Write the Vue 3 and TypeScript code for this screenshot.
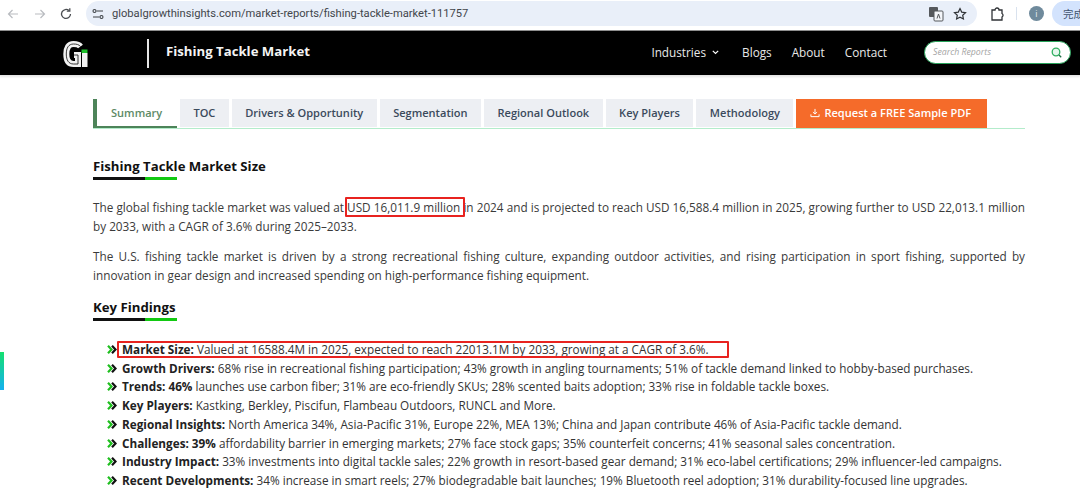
<script setup lang="ts">
const tabs: string[] = ['TOC', 'Drivers & Opportunity', 'Segmentation', 'Regional Outlook', 'Key Players', 'Methodology']
const findings: { label: string; text: string }[] = [
  { label: 'Market Size:', text: 'Valued at 16588.4M in 2025, expected to reach 22013.1M by 2033, growing at a CAGR of 3.6%.' },
  { label: 'Growth Drivers:', text: '68% rise in recreational fishing participation; 43% growth in angling tournaments; 51% of tackle demand linked to hobby-based purchases.' },
  { label: 'Trends: 46%', text: 'launches use carbon fiber; 31% are eco-friendly SKUs; 28% scented baits adoption; 33% rise in foldable tackle boxes.' },
  { label: 'Key Players:', text: 'Kastking, Berkley, Piscifun, Flambeau Outdoors, RUNCL and More.' },
  { label: 'Regional Insights:', text: 'North America 34%, Asia-Pacific 31%, Europe 22%, MEA 13%; China and Japan contribute 46% of Asia-Pacific tackle demand.' },
  { label: 'Challenges: 39%', text: 'affordability barrier in emerging markets; 27% face stock gaps; 35% counterfeit concerns; 41% seasonal sales concentration.' },
  { label: 'Industry Impact:', text: '33% investments into digital tackle sales; 22% growth in resort-based gear demand; 31% eco-label certifications; 29% influencer-led campaigns.' },
  { label: 'Recent Developments:', text: '34% increase in smart reels; 27% biodegradable bait launches; 19% Bluetooth reel adoption; 31% durability-focused line upgrades.' },
]
</script>

<template>
  <div class="page">
    <header class="browser">
      <div class="nav-icons">
        <svg width="14" height="14" viewBox="0 0 14 14" fill="none" stroke="#b9bcc0" stroke-width="1.2"><path d="M12 7H2.500M6.500 3 2.500 7l4 4" /></svg>
        <svg width="14" height="14" viewBox="0 0 14 14" fill="none" stroke="#b9bcc0" stroke-width="1.2"><path d="M2 7h9.500M7.500 3l4 4-4 4" /></svg>
        <svg width="14" height="14" viewBox="0 0 14 14" fill="none" stroke="#4a4d51" stroke-width="1.300"><path d="M11.500 7A4.500 4.500 0 1 1 10 3.600" /><path d="M10.800 1.200v3h-3" /></svg>
      </div>
      <div class="omnibox">
        <svg class="tune" width="14" height="14" viewBox="0 0 14 14" fill="none" stroke="#3f4347" stroke-width="1.100"><path d="M5.500 4H12M2 10h6.500" /><circle cx="3.500" cy="4" r="1.500" /><circle cx="10.500" cy="10" r="1.500" /></svg>
        <span class="url">globalgrowthinsights.com/market-reports/fishing-tackle-market-111757</span>
        <svg class="translate" width="16" height="16" viewBox="0 0 16 16"><rect x="1" y="1" width="9" height="10" rx="1" fill="#55585c" /><rect x="6" y="5" width="9" height="10" rx="1" fill="#f4f6fa" stroke="#55585c" /><path d="M9 12.500 10.500 8l1.500 4.500" stroke="#55585c" fill="none" /></svg>
        <svg class="star" width="14" height="14" viewBox="0 0 14 14" fill="none" stroke="#2f3236" stroke-width="1.200"><path d="m7 1.600 1.700 3.500 3.800.5-2.800 2.600.7 3.800L7 10.200 3.600 12l.7-3.800L1.500 5.600l3.800-.5z" /></svg>
      </div>
      <svg class="ext" width="16" height="16" viewBox="0 0 16 16" fill="none" stroke="#2f3236" stroke-width="1.300"><path d="M3 4h3a2 2 0 0 1 4 0h3v3.500a2 2 0 0 1 0 3.500V14H3z" /></svg>
      <span class="divider"></span>
      <span class="avatar">i</span>
      <span class="done">完成</span>
    </header>

    <nav class="site-nav">
      <svg class="logo" width="25" height="26" viewBox="0 0 25 26" fill="none" aria-label="logo">
        <path d="M17.500 5.500C16 3.500 13.500 3 10.500 3 5.500 3 3.300 7 3.300 13S5.500 23 10.500 23H15V14H11" stroke="#f2f2f2" stroke-width="6" />
        <path d="M17.500 5.500C16 3.500 13.500 3 10.500 3 5.500 3 3.300 7 3.300 13S5.500 23 10.500 23H15V14H11" stroke="#222" stroke-width="0.900" />
        <rect x="19" y="12" width="5.500" height="14" fill="#f2f2f2" />
        <rect x="18.500" y="8.500" width="6" height="3.500" fill="#1fc02c" />
      </svg>
      <span class="rule"></span>
      <span class="title">Fishing Tackle Market</span>
      <div class="links">
        <span>Industries <svg class="chev" width="7" height="5" viewBox="0 0 7 5" fill="none" stroke="#fff" stroke-width="1.200"><path d="m.8.8 2.700 2.700L6.200.8" /></svg></span>
        <span>Blogs</span>
        <span>About</span>
        <span>Contact</span>
      </div>
      <div class="search">
        <span>Search Reports</span>
        <svg width="11" height="11" viewBox="0 0 11 11" fill="none" stroke="#2fae5f" stroke-width="1.300"><circle cx="5" cy="5" r="3.800" fill="#e6f7ee" /><path d="m8 8 2.200 2.200" stroke="#1f6f45" /></svg>
      </div>
    </nav>

    <main class="content">
      <div class="tabs">
        <span class="tab active">Summary</span>
        <span v-for="t in tabs" :key="t" class="tab">{{ t }}</span>
        <span class="tab cta">
          <svg width="10" height="10" viewBox="0 0 11 11" fill="none" stroke="#fff" stroke-width="1.100"><path d="M5.500 1v5.500M3.200 4.500l2.300 2.200 2.300-2.200M1 7v2.500h9V7" /></svg>
          Request a FREE Sample PDF
        </span>
      </div>

      <h2 class="heading first">Fishing Tackle Market Size</h2>
      <p class="para">
        The global fishing tackle market was valued at <span class="mark-a">USD 16,011.9 million</span> in 2024 and is projected to reach USD 16,588.4 million in 2025, growing further to USD 22,013.1 million by 2033, with a CAGR of 3.6% during 2025–2033.
      </p>
      <p class="para second">
        The U.S. fishing tackle market is driven by a strong recreational fishing culture, expanding outdoor activities, and rising participation in sport fishing, supported by innovation in gear design and increased spending on high-performance fishing equipment.
      </p>

      <h2 class="heading">Key Findings</h2>
      <ul class="list">
        <li v-for="(f, i) in findings" :key="f.label" :class="{ marked: i === 0 }">
          <svg class="arrow" width="10" height="9" viewBox="0 0 10 9" fill="none" stroke-width="2.200"><path d="M1 .8 4.500 4.500 1 8.200" stroke="#1fbf1f" /><path d="M5 .8 8.500 4.500 5 8.200" stroke="#111" /></svg>
          <b>{{ f.label }}</b> {{ f.text }}
        </li>
      </ul>
    </main>

    <span class="edge"></span>
  </div>
</template>

<style>
html, body { margin: 0; background: #fff; overflow: hidden; }
</style>

<style scoped>
.page {
  position: relative;
  width: 1080px;
  height: 491px;
  overflow: hidden;
  font-family: "Open Sans", "Noto Sans", sans-serif;
  color: #333;
}
.browser {
  height: 31px;
  box-sizing: border-box;
  padding-bottom: 3px;
  display: flex;
  align-items: center;
  background: #fff;
  border-bottom: 1px solid #8f8f8f;
}
.nav-icons {
  display: flex;
  gap: 12.500px;
  padding-left: 6px;
  width: 86px;
  box-sizing: border-box;
}
.omnibox {
  width: 891px;
  height: 25px;
  border-radius: 13px;
  background: #e9eff9;
  display: flex;
  align-items: center;
}
.tune { margin-left: 5px; }
.url {
  margin-left: 7px;
  font-family: "Roboto", "Noto Sans", sans-serif;
  font-size: 11.160px;
  color: #42464b;
  flex: 1;
}
.translate { margin-right: 9px; }
.star { margin-right: 10px; }
.ext { margin-left: 12px; }
.divider { width: 1px; height: 13px; background: #d9e2ee; margin-left: 11px; }
.avatar {
  width: 15px;
  height: 15px;
  border-radius: 50%;
  background: #6f8a9c;
  color: #e8eef2;
  font-size: 9px;
  line-height: 15px;
  text-align: center;
  margin-left: 12px;
}
.done {
  margin-left: 8px;
  flex: 1;
  height: 25px;
  line-height: 25px;
  padding-left: 11px;
  border-radius: 13px 0 0 13px;
  background: #d3e3fd;
  color: #40526e;
  font-size: 10.500px;
  font-family: "Noto Sans CJK SC", sans-serif;
  white-space: nowrap;
  overflow: hidden;
}
.site-nav {
  height: 45px;
  box-sizing: border-box;
  background: #000;
  display: flex;
  align-items: center;
  color: #fff;
  border-bottom: 1px solid #e6e6e6;
  box-shadow: 0 1px 2px rgba(0, 0, 0, 0.1);
}
.logo { margin-left: 63px; margin-top: 2px; flex: none; }
.rule { width: 2px; height: 29px; background: #e6e6e6; margin-left: 59px; margin-top: 1px; }
.title {
  margin-left: 17px;
  font-size: 13.200px;
  font-weight: 700;
  color: #f4f4f4;
  margin-top: -4px;
}
.links {
  margin-left: auto;
  display: flex;
  gap: 20px;
  font-size: 11.750px;
  color: #e8e8e8;
  margin-top: -2px;
}
.chev { margin-left: 3px; margin-right: 3px; vertical-align: 2px; }
.search {
  margin-left: 37px;
  margin-right: 9px;
  width: 147px;
  height: 23px;
  box-sizing: border-box;
  background: #fff;
  border: 1px solid #27a35a;
  border-radius: 11.500px;
  display: flex;
  align-items: center;
  justify-content: space-between;
  padding: 0 8px;
  font-size: 8.750px;
  font-style: italic;
  color: #a3a3a3;
  margin-top: -2px;
}
.content { padding: 23px 55px 0 93px; }
.tabs {
  display: flex;
  gap: 3px;
  height: 30px;
  border-bottom: 1px solid #b3eccb;
  box-sizing: border-box;
  font-size: 11.060px;
  font-weight: 600;
  color: #3b4a5c;
  white-space: nowrap;
}
.tab {
  height: 28px;
  line-height: 28px;
  background: #edeff3;
  padding: 0 13.450px;
}
.tab.active {
  background: #fff;
  color: #5d8a66;
  border-left: 4px solid #4d8459;
  border-bottom: 2px solid #4d8459;
  height: 29px;
  box-sizing: border-box;
  line-height: 27px;
  padding: 0 13px 0 14px;
  width: 84px;
}
.tab.cta {
  background: #f56b2a;
  color: #fff;
  height: 29px;
  padding: 0 16px 1px 14px;
  box-sizing: border-box;
  display: flex;
  align-items: center;
  gap: 4px;
}
.heading {
  margin: 0;
  font-size: 13.200px;
  line-height: 19px;
  font-weight: 700;
  color: #111;
  width: max-content;
  position: relative;
  padding-bottom: 4px;
}
.heading.first { margin-top: 28px; }
.heading::after {
  content: "";
  display: block;
  position: absolute;
  left: 0;
  bottom: 0;
  width: 84px;
  height: 3px;
  background: linear-gradient(90deg, #111 0 52px, #12c912 52px);
}
.para {
  margin: 18px 0 0;
  width: 932px;
  font-size: 11.750px;
  line-height: 19px;
  text-align: justify;
  color: #3a3a3a;
}
.para.second { margin-top: 11px; }
.second + .heading { margin-top: 13px; }
.mark-a { position: relative; }
.mark-a::after {
  content: "";
  position: absolute;
  left: -2px;
  right: -5px;
  top: -2px;
  bottom: -2px;
  border: 2px solid #e8231f;
  border-radius: 1px;
}
.list {
  list-style: none;
  margin: 19px 0 0;
  padding: 0 0 0 14px;
  font-size: 11.740px;
  line-height: 18.700px;
  color: #333;
  white-space: nowrap;
}
.list li { position: relative; padding-left: 15px; }
.list b { color: #222; font-weight: 700; }
.arrow { position: absolute; left: 0; top: 5px; }
.marked::after {
  content: "";
  position: absolute;
  left: 10px;
  top: 1px;
  width: 608px;
  height: 13px;
  border: 2px solid #e8231f;
  border-radius: 1px;
}
.edge {
  position: absolute;
  left: 0;
  top: 352px;
  width: 4px;
  height: 38px;
  background: linear-gradient(180deg, #14e06e, #14b0f0);
}
</style>
